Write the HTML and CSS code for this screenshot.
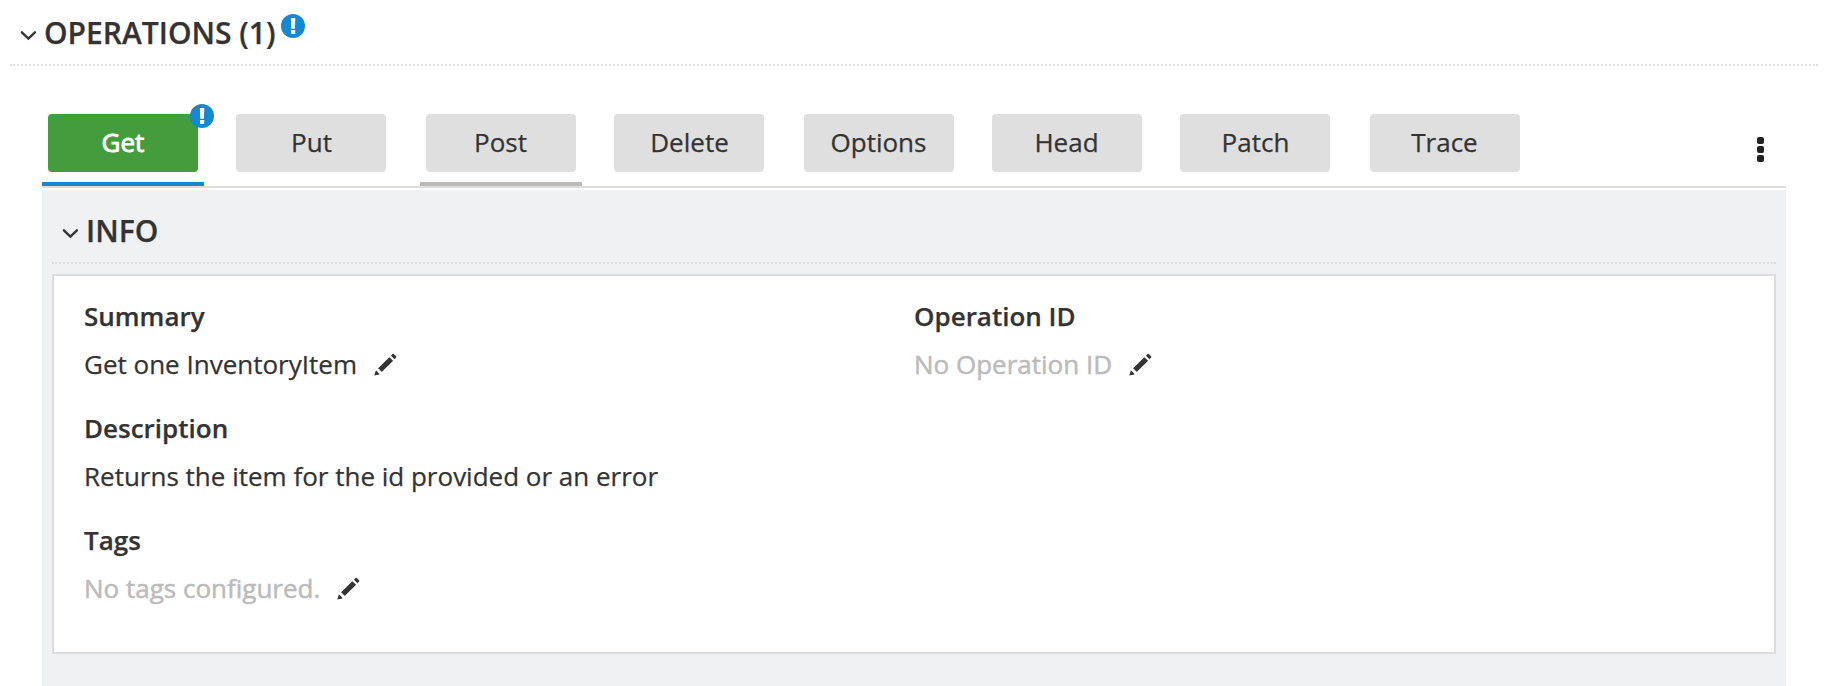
FILE: index.html
```html
<!DOCTYPE html>
<html lang="en">
<head>
<meta charset="utf-8">
<title>Operations</title>
<link rel="stylesheet" href="styles.css">
</head>
<body>
<svg class="defs" width="0" height="0">
  <symbol id="chevron" viewBox="0 0 16 10"><path d="M1.900 1.300 8.400 7.600l6.500-6.300" fill="none" stroke="#333" stroke-width="2.300" stroke-linecap="round" stroke-linejoin="miter"/></symbol>
  <symbol id="alert" viewBox="0 0 24 24"><circle cx="12" cy="12" r="12" fill="#1788ce"/><path d="M9.900 4h4.400l-.4 10.700h-3.600zM10 16h4.200v4H10z" fill="#fff"/></symbol>
  <symbol id="pencil" viewBox="0 0 24 24"><path d="M1.200 23.500 2.700 18.900l.5-.3 3.400 3.300-.3.500zM4.900 16.400 16.300 5.300l3.800 3.500L8.700 20l-.6-1.200-1.300-.4-.4-1.300zM18 3.700l1.600-1.600c.4-.4.800-.4 1.200 0l2.300 2.200c.4.400.4.800 0 1.200l-1.500 1.700z" fill="#333"/></symbol>
</svg>
<main class="page">
  <h2 class="heading">
    <svg class="chevron"><use href="#chevron"/></svg>
    <span class="title">OPERATIONS (1)</span>
    <svg class="alert"><use href="#alert"/></svg>
  </h2>
  <section class="operations">
    <nav class="tabs">
      <div class="tab active"><span class="method get">Get</span><svg class="alert"><use href="#alert"/></svg></div>
      <div class="tab"><span class="method put">Put</span></div>
      <div class="tab hovered wide"><span class="method">Post</span></div>
      <div class="tab"><span class="method put">Delete</span></div>
      <div class="tab wide"><span class="method">Options</span></div>
      <div class="tab"><span class="method">Head</span></div>
      <div class="tab"><span class="method put">Patch</span></div>
      <div class="tab wide"><span class="method">Trace</span></div>
      <div class="menu"><i></i><i></i><i></i></div>
    </nav>
    <div class="panel">
      <h2 class="heading">
        <svg class="chevron"><use href="#chevron"/></svg>
        <span class="title">INFO</span>
      </h2>
      <div class="card">
        <div class="column">
          <div class="field">
            <div class="label">Summary</div>
            <div class="value">Get one InventoryItem<svg class="pencil"><use href="#pencil"/></svg></div>
          </div>
          <div class="field">
            <div class="label">Description</div>
            <div class="value">Returns the item for the id provided or an error</div>
          </div>
          <div class="field">
            <div class="label">Tags</div>
            <div class="value empty">No tags configured.<svg class="pencil"><use href="#pencil"/></svg></div>
          </div>
        </div>
        <div class="column">
          <div class="field">
            <div class="label">Operation ID</div>
            <div class="value empty">No Operation ID<svg class="pencil"><use href="#pencil"/></svg></div>
          </div>
        </div>
      </div>
    </div>
  </section>
</main>
</body>
</html>
```
FILE: styles.css
```css
* { box-sizing: border-box; }

body {
  margin: 0;
  background: #fff;
  color: #333;
  font: 26px/48px "Open Sans", "Noto Sans", sans-serif;
  -webkit-text-stroke: 0.25px currentColor;
  overflow: hidden;
}

.defs { display: block; height: 0; }

.page {
  height: 686px;
  padding: 0 10px;
  display: flex;
  flex-direction: column;
}

.heading {
  display: flex;
  align-items: flex-start;
  height: 66px;
  margin: 0;
  padding: 10px 0 0 10px;
  border-bottom: 2px dotted #ddd;
  font-size: 30px;
  line-height: 44px;
  font-weight: 600;
}

.title { padding-top: 1px; }

.chevron {
  width: 16px;
  height: 10px;
  margin: 21px 8px 0 0;
}

.alert { width: 24px; height: 24px; }

.heading .alert { margin: 4px 0 0 6px; }

.operations {
  flex: 1;
  display: flex;
  flex-direction: column;
  padding: 0 32px;
}

.tabs {
  display: flex;
  gap: 26px;
  height: 122px;
  padding-top: 48px;
  border-bottom: 2px solid #ddd;
}

.tab {
  position: relative;
  width: 162px;
  padding: 0 6px;
  border-bottom: 4px solid transparent;
}

.tab.wide { margin-left: 2px; }
.tab.active { border-color: #1788ce; }
.tab.hovered { border-color: #bbb; }

.tab .alert {
  position: absolute;
  top: -10px;
  right: -10px;
}

.method {
  display: block;
  height: 58px;
  padding-right: 1px;
  border-radius: 4px;
  background: #dfdfdf;
  line-height: 56px;
  text-align: center;
}

.method.put { padding: 0 0 0 1px; }

.method.get {
  padding: 0;
  background: #449c3c;
  color: #fff;
  -webkit-text-stroke: 0.9px #fff;
}

.menu {
  display: flex;
  flex-direction: column;
  gap: 2px;
  margin: 23px 22px 0 auto;
}

.menu i {
  width: 7px;
  height: 7px;
  border-radius: 2px;
  background: #222;
}

.panel {
  flex: 1;
  margin-top: 2px;
  padding: 0 10px;
  background: #f0f1f3;
}

.panel .heading {
  height: 74px;
  padding-top: 18px;
}

.card {
  display: grid;
  grid-template-columns: 830px 1fr;
  height: 380px;
  margin-top: 10px;
  padding: 16px 30px;
  border: 2px solid #ddd;
  background: #fff;
}

.field { margin-bottom: 16px; }
.label { font-weight: 600; }

.value {
  display: flex;
  align-items: center;
}

.value.empty {
  color: #bbb;
  -webkit-text-stroke: 0.5px #bbb;
}

.pencil {
  width: 24px;
  height: 24px;
  margin-left: 16px;
  -webkit-text-stroke: 0;
}
```
